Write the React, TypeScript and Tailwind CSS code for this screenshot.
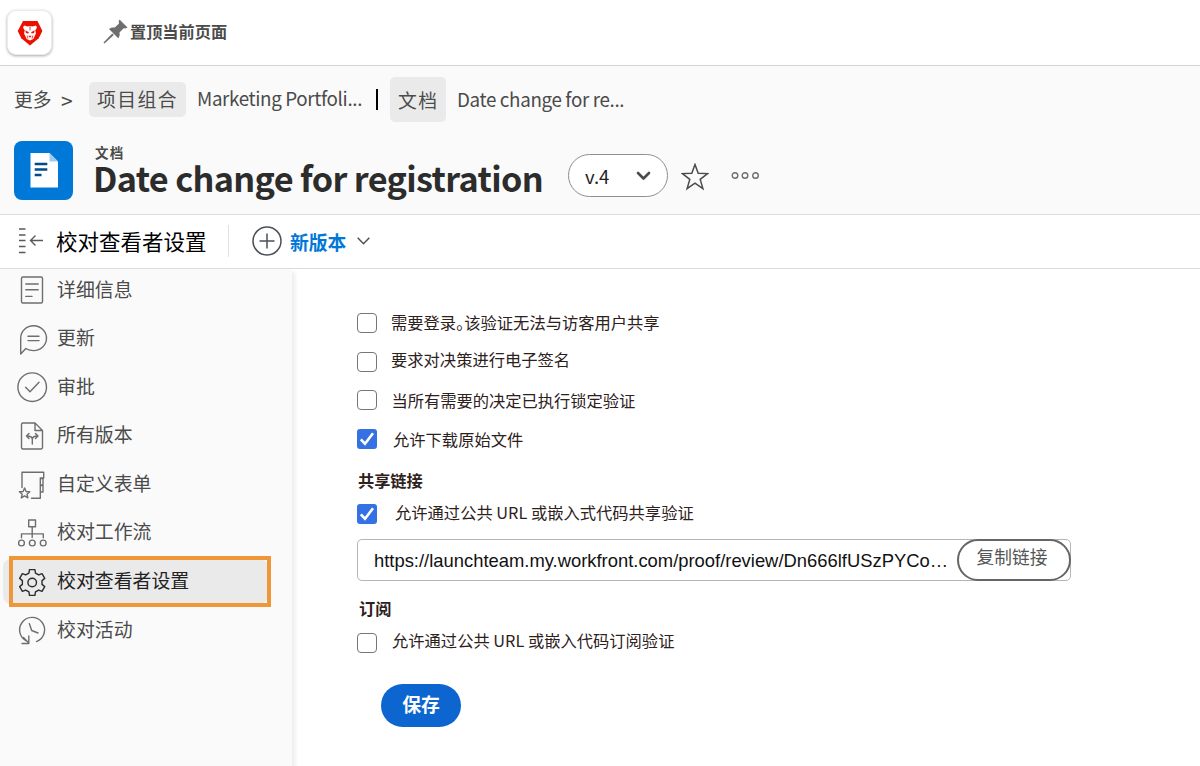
import React from "react";

const NAV = [
  { label: "详细信息", icon: "details" },
  { label: "更新", icon: "updates" },
  { label: "审批", icon: "approvals" },
  { label: "所有版本", icon: "versions" },
  { label: "自定义表单", icon: "forms" },
  { label: "校对工作流", icon: "workflow" },
  { label: "校对查看者设置", icon: "settings", active: true },
  { label: "校对活动", icon: "activity" },
];

function gearPath() {
  const pts: string[] = [];
  const steps: [number, number][] = [
    [-19, 10],
    [-12, 13.2],
    [12, 13.2],
    [19, 10],
  ];
  for (let i = 0; i < 6; i++) {
    for (const [d, r] of steps) {
      const a = ((i * 60 + d - 90) * Math.PI) / 180;
      pts.push(`${(16.2 + r * Math.cos(a)).toFixed(2)} ${(16.5 + r * Math.sin(a)).toFixed(2)}`);
    }
  }
  return "M" + pts.join("L") + "Z";
}

const GLYPHS: Record<string, React.ReactNode> = {
  details: (
    <>
      <rect x="5.5" y="3" width="21" height="26" rx="1.5" />
      <path d="M9.8 10H22.2M9.8 15.7H22.2M9.8 22.4H16" />
    </>
  ),
  updates: (
    <>
      <path d="M4.7 31V15a12.9 12.4 0 1 1 12.9 12.6c-3.4 0-5.6-.8-7.8-2.1z" />
      <path d="M12 13.2H23M12 17.6H23" />
    </>
  ),
  approvals: (
    <>
      <circle cx="16.2" cy="16.2" r="14.3" />
      <path d="M9.6 16.2l4.4 4.6 9-9.6" />
    </>
  ),
  versions: (
    <>
      <path d="M19 3H7a1.5 1.5 0 0 0-1.5 1.5v23A1.5 1.5 0 0 0 7 29h18a1.5 1.5 0 0 0 1.5-1.5V10.5zV10.5h7.5" />
      <path d="M16.3 24V19.5C16.3 17 14.5 16 11 16M16.3 19.5C16.3 17 18 16 21.5 16M13 13.4L10.5 16l2.5 2.600M19.5 13.4L22 16l-2.5 2.600" />
    </>
  ),
  forms: (
    <>
      <path d="M6 18.5V3.3H27.7V9H24.3V29.3H15.5M24.3 9.5h2.700v6.500h-2.700M24.3 16.5h2.700v6.500h-2.700" />
      <path d="M8.6 19l1.5 3.5 3.7.3-2.8 2.4.9 3.7-3.3-2-3.3 2 .9-3.7-2.8-2.4 3.7-.3z" />
    </>
  ),
  workflow: (
    <>
      <rect x="12.7" y="3" width="6.8" height="6.8" />
      <path d="M16.2 9.8V20.5M5.5 20.8V16.9H27.3V20.8" />
      <circle cx="5.5" cy="26" r="2.9" />
      <circle cx="16.3" cy="26" r="2.9" />
      <circle cx="27.2" cy="26" r="2.9" />
    </>
  ),
  settings: (
    <>
      <path d={gearPath()} />
      <circle cx="16.2" cy="16.5" r="4.3" />
    </>
  ),
  activity: (
    <>
      <path d="M12.3 27.8A12.5 12.5 0 1 1 20.5 27.6M6 29.5H12.8V22M12.3 28.5L7.5 23.5" />
      <path d="M13.3 9.6L15.7 16.5 22 19" />
    </>
  ),
};

function NavIcon({ name, active }: { name: string; active?: boolean }) {
  return (
    <svg width="32" height="32" viewBox="0 0 32 32" fill="none" stroke={active ? "#2c2c2c" : "#6e6e6e"} strokeWidth="1.4" strokeLinejoin="round" strokeLinecap="round" className="shrink-0">
      {GLYPHS[name]}
    </svg>
  );
}

function Box({ checked }: { checked?: boolean }) {
  return checked ? (
    <span className="flex size-5 shrink-0 items-center justify-center rounded-[3px] bg-[#3571e3]">
      <svg width="20" height="20" viewBox="0 0 20 20" fill="none" stroke="#fff" strokeWidth="2.6">
        <path d="M3.8 10.3l4.2 4.4L16 4.3" />
      </svg>
    </span>
  ) : (
    <span className="size-5 shrink-0 rounded-[4px] border-[1.5px] border-[#767676] bg-white" />
  );
}

export default function App() {
  return (
    <div className="flex h-[766px] w-[1200px] flex-col overflow-hidden bg-white font-['Noto_Sans_CJK_SC',sans-serif] text-[#4b4b4b]">
      <header className="flex h-[66px] shrink-0 items-center border-b border-[#d3d3d3] pb-px pl-[7px]">
        <div className="flex size-[45px] items-center justify-center rounded-[9px] border border-[#ececec] bg-white shadow-[0_1px_3px_rgba(0,0,0,0.35)]">
          <svg width="26" height="26" viewBox="0 0 26 26" className="mt-[2px]">
            <path d="M6 .9h14.5l4.900 10.200-3.700 7.200-8.700 7.200-8.700-7.200L.7 11.100z" fill="#eb1000" />
            <path d="M7 5.500L10.500 6.500 13 6l2.500.5L19 5.500l1 2.200-1.700 2.500.6 3.300-1.400 3-1.200 2.500L13 20.500l-3.300-1.500-1.200-2.500-1.400-3 .6-3.300L6 7.700z" fill="#fff" />
            <path d="M8.300 10.200l3.500 2-.3 1.300-2.600-.6zM17.700 10.200l-3.500 2 .3 1.300 2.600-.6zM11.300 15.800h3.400L13 17.700zM12.500 6.500h1l-.2 4h-.6z" fill="#eb1000" />
            <path d="M10 15.500l1 3M16 15.500l-1 3" stroke="#eb1000" strokeWidth=".8" />
          </svg>
        </div>
        <svg width="25" height="25" viewBox="0 0 25 25" fill="#6e6e6e" className="-mt-px ml-[51px]">
          <path d="M16.5 .5L24.5 8.500c-1.500 1-2.600 1-3.800.8L16.5 13.500c.5 2.500 0 4.300-1.300 5.700L6 10c1.500-1.400 3.400-1.900 5.800-1.400L16 4.400c-.4-1.500-.3-2.700.5-3.900z" />
          <path d="M9.300 14.500L10.800 16 1.500 24.500.5 23.600z" />
        </svg>
        <span className="-mt-[2px] ml-[2px] text-[16.2px] leading-6 font-bold">置顶当前页面</span>
      </header>

      <section className="flex h-[149px] shrink-0 flex-col border-b border-[#dcdcdc] bg-[#fafafa]">
        <div className="mt-[11px] flex h-[45px] items-center pl-[14px] whitespace-nowrap">
          <span className="w-[47px] shrink-0 text-[18.8px]">更多</span>
          <span className="w-[28px] shrink-0 pt-[2px] text-[21px]">&gt;</span>
          <span className="flex h-[35px] w-[97px] shrink-0 items-center rounded-[5px] bg-[#eaeaea] pl-2 text-[18.8px] tracking-[1.5px]">项目组合</span>
          <span className="-mt-[3px] w-[190px] shrink-0 pl-[11px] text-[18.8px] tracking-[-0.35px]">Marketing Portfoli...</span>
          <span className="h-[21px] w-[2px] shrink-0 bg-black" />
          <span className="ml-3 flex h-[45px] w-[56px] shrink-0 items-center rounded-[5px] bg-[#eaeaea] pt-px pl-2 text-[18.8px] tracking-[1.4px]">文档</span>
          <span className="-mt-px ml-[11px] text-[18.8px] tracking-[-0.35px]">Date change for re...</span>
        </div>
        <div className="mt-[19px] flex pl-[14px]">
          <div className="flex size-[59px] shrink-0 items-center justify-center rounded-[8px] bg-[#0078d8]">
            <svg width="28" height="35" viewBox="0 0 28 35">
              <path d="M.5 0H19.5L28 8.500V34.500H.5z" fill="#fff" />
              <path d="M19.5 0L28 8.500H19.5z" fill="#9fcbf2" />
              <path d="M4.7 11H17.3M4.7 16.5H17.3M4.7 22H11.5" stroke="#004b8c" strokeWidth="2.3" />
            </svg>
          </div>
          <div className="ml-[20px] w-[475px] shrink-0">
            <div className="h-[20px] pt-[2px] pl-[2px] text-[13.5px] leading-[18px] font-bold tracking-[1.2px]">文档</div>
            <h1 className="text-[34.2px] leading-[32px] font-bold tracking-[-0.64px] whitespace-nowrap text-[#2c2c2c]">Date change for registration</h1>
          </div>
          <div className="mt-[13px] flex h-[43px] w-[100px] shrink-0 items-center justify-between rounded-full border border-[#8e8e8e] bg-white pr-4 pl-4">
            <span className="pt-[2px] text-[18.5px] text-[#222]">v.4</span>
            <svg width="15" height="10" viewBox="0 0 15 10" fill="none" stroke="#4b4b4b" strokeWidth="2.6" strokeLinecap="round" strokeLinejoin="round"><path d="M2 2l5.500 5.500L13 2" /></svg>
          </div>
          <svg width="28" height="28" viewBox="0 0 28 28" fill="none" stroke="#4b4b4b" strokeWidth="1.5" className="mt-[22px] ml-[13px]">
            <path d="M14 1.500L17.200 10.300 26.600 10.600 19.200 16.400 21.900 25.600 14 20.200 6.100 25.600 8.800 16.400 1.400 10.600 10.800 10.300z" />
          </svg>
          <svg width="28" height="8" viewBox="0 0 28 8" fill="none" stroke="#6e6e6e" strokeWidth="1.4" className="mt-[31px] ml-[22px]">
            <circle cx="4" cy="3.5" r="2.8" /><circle cx="14" cy="3.5" r="2.8" /><circle cx="24.5" cy="3.5" r="2.8" />
          </svg>
        </div>
      </section>

      <div className="flex h-[54px] shrink-0 items-center border-b border-[#dcdcdc] pb-px pl-[17px]">
        <svg width="28" height="28" viewBox="0 0 28 28" fill="none" stroke="#5a5a5a" strokeWidth="1.4">
          <path d="M2 2H8.500M2 8H8.500M2 13.500H8.500M2 19.500H8.500M2 25.500H8.500" />
          <path d="M26 13.500H13.500M18.500 8.500L13.500 13.500l5 5" />
        </svg>
        <span className="ml-[11px] w-[172px] text-[21.5px] text-black">校对查看者设置</span>
        <span className="h-8 w-px bg-[#e1e1e1]" />
        <svg width="30" height="30" viewBox="0 0 30 30" fill="none" stroke="#4b5058" strokeWidth="1.5" className="ml-[23px]">
          <circle cx="15" cy="15" r="14" /><path d="M15 7.500V22.500M7.500 15H22.500" />
        </svg>
        <span className="mt-[2px] ml-[8px] text-[18.8px] font-bold text-[#0078d8]">新版本</span>
        <svg width="13" height="8" viewBox="0 0 13 8" fill="none" stroke="#4b5058" strokeWidth="1.5" className="ml-[11px]"><path d="M.7 .7l5.800 6 5.800-6" /></svg>
      </div>

      <div className="flex min-h-0 flex-1">
        <aside className="w-[292px] shrink-0 bg-[#fafafa] shadow-[3px_3px_4px_rgba(0,20,40,0.08)]">
          <nav className="-mt-[3px] pl-[3px]">
            {NAV.map((n) => (
              <div key={n.icon} className="relative flex h-[48.57px] items-center">
                <div className={n.active ? "flex h-[45px] w-[265px] items-center rounded-[8px] bg-[#eaeaea] pl-[13px] text-[#222]" : "flex h-[45px] items-center pl-[13px]"}>
                  <NavIcon name={n.icon} active={n.active} />
                  <span className="-mt-[3px] ml-[9px] text-[18.9px]">{n.label}</span>
                </div>
                {n.active && <div className="absolute top-[-1.5px] left-[6px] h-[51px] w-[262px] border-4 border-[#ef9738]" />}
              </div>
            ))}
          </nav>
        </aside>

        <main className="flex flex-col pl-[65px] text-[16.3px] leading-6 text-[#2d211c]">
          <div className="mt-[34.5px] flex h-[38.8px] items-center">
            <Box /><span className="-mt-[2px] ml-[14px] [font-feature-settings:'halt']">需要登录。该验证无法与访客用户共享</span>
          </div>
          <div className="flex h-[38.8px] items-center">
            <Box /><span className="-mt-[5px] ml-[14px]">要求对决策进行电子签名</span>
          </div>
          <div className="flex h-[38.8px] items-center">
            <Box /><span className="-mt-px ml-[14.5px] tracking-[-0.04px]">当所有需要的决定已执行锁定验证</span>
          </div>
          <div className="flex h-[38.8px] items-center">
            <Box checked /><span className="ml-[16px]">允许下载原始文件</span>
          </div>
          <div className="mt-[9px] pl-px text-[16.2px] font-bold">共享链接</div>
          <div className="mt-[10.5px] flex h-6 items-center">
            <Box checked /><span className="-mt-[5px] ml-[18px]">允许通过公共 URL 或嵌入式代码共享验证</span>
          </div>
          <div className="mt-[12.5px] flex h-[42px] w-[714px] items-start rounded-[5px] border-[1.5px] border-[#b5b5b5] pl-[16px]">
            <span className="w-[583px] shrink-0 font-['Liberation_Sans',sans-serif] text-[18.4px] leading-[41px] whitespace-nowrap text-[#111]">https://launchteam.my.workfront.com/proof/review/Dn666lfUSzPYCo…</span>
            <span className="-mt-px flex h-[42px] w-[114px] shrink-0 justify-center rounded-full border-2 border-[#666] pr-1 text-[17.7px] leading-[31px] text-[#555]">复制链接</span>
          </div>
          <div className="mt-[15.5px] pl-[2px] text-[16.2px] font-bold">订阅</div>
          <div className="mt-[10.5px] flex h-6 items-center">
            <Box /><span className="-mt-[6px] ml-[15px]">允许通过公共 URL 或嵌入代码订阅验证</span>
          </div>
          <button className="mt-[29px] ml-6 flex h-[43px] w-[80px] items-center justify-center rounded-full bg-[#0d66d0] pb-[2px] text-[18.8px] font-bold text-white">保存</button>
        </main>
      </div>
    </div>
  );
}
